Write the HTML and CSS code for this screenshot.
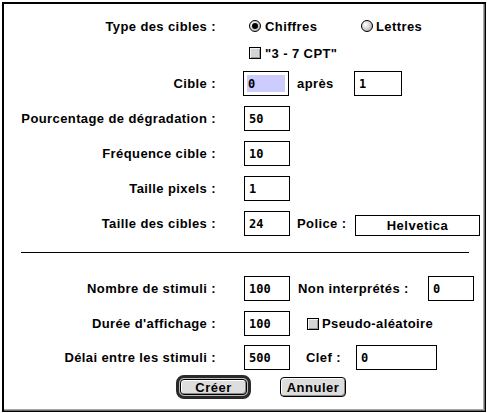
FILE: index.html
```html
<!DOCTYPE html>
<html lang="fr">
<head>
<meta charset="utf-8">
<title>Cibles</title>
<link rel="stylesheet" href="styles.css">
</head>
<body>
<div class="window">
  <div class="row row-type">
    <span class="label">Type des cibles :</span>
    <span class="radio on chiffres"></span><span class="opt opt-chiffres">Chiffres</span>
    <span class="radio lettres"></span><span class="opt">Lettres</span>
  </div>
  <div class="row row-check">
    <span class="check cpt"></span><span class="opt">"3 - 7 CPT"</span>
  </div>
  <div class="row r-cible">
    <span class="label">Cible :</span>
    <span class="field f-first"><span class="sel">0</span></span>
    <span class="label2 apres">après</span>
    <span class="field f-apres">1</span>
  </div>
  <div class="row r-std">
    <span class="label">Pourcentage de dégradation :</span>
    <span class="field">50</span>
  </div>
  <div class="row r-std">
    <span class="label">Fréquence cible :</span>
    <span class="field">10</span>
  </div>
  <div class="row r-std">
    <span class="label">Taille pixels :</span>
    <span class="field">1</span>
  </div>
  <div class="row r-std">
    <span class="label">Taille des cibles :</span>
    <span class="field">24</span>
    <span class="label2 police">Police :</span>
    <span class="popup">Helvetica</span>
  </div>
  <div class="sep"></div>
  <div class="row r-nombre">
    <span class="label">Nombre de stimuli :</span>
    <span class="field">100</span>
    <span class="label2 nonint">Non interprétés :</span>
    <span class="field f-nonint">0</span>
  </div>
  <div class="row r-std">
    <span class="label">Durée d'affichage :</span>
    <span class="field">100</span>
    <span class="check pseudo"></span><span class="opt">Pseudo-aléatoire</span>
  </div>
  <div class="row r-delai">
    <span class="label">Délai entre les stimuli :</span>
    <span class="field">500</span>
    <span class="label2 clef">Clef :</span>
    <span class="field f-clef">0</span>
  </div>
  <div class="buttons">
    <span class="default-ring"><span class="btn">Créer</span></span>
    <span class="btn annuler">Annuler</span>
  </div>
</div>
</body>
</html>
```

FILE: styles.css
```css
html, body {
  margin: 0;
  padding: 0;
  background: #ffffff;
}
body {
  width: 487px;
  height: 413px;
  overflow: hidden;
  font-family: "Liberation Sans", Arial, sans-serif;
  font-weight: bold;
  font-size: 13px;
  color: #000;
}
.window {
  margin: 2px 0 0 2px;
  width: 484px;
  height: 410px;
  box-sizing: border-box;
  border: 2px solid #000;
  border-right: 1px solid #000;
  border-bottom: 1px solid #000;
  box-shadow: inset -1px -1px 0 #6a6a6a, inset -2px -2px 0 #a8a8a8;
  background: #fff;
  display: flex;
  flex-direction: column;
  padding-top: 14px;
}
.row {
  display: flex;
  align-items: center;
  height: 25px;
  flex: none;
}
.label {
  width: 212px;
  text-align: right;
  flex: none;
  letter-spacing: 0.4px;
  white-space: nowrap;
}
.opt, .label2 {
  letter-spacing: 0.4px;
  white-space: nowrap;
  flex: none;
}
.row-type { height: 16px; }
.row-check { height: 12px; margin-top: 13px; }
.r-cible { margin-top: 12px; }
.r-std { margin-top: 10px; }
.r-nombre { margin-top: 23px; }
.r-delai { margin-top: 9px; }

.radio {
  width: 12px;
  height: 12px;
  box-sizing: border-box;
  border: 1px solid #000;
  border-radius: 50%;
  background: radial-gradient(circle at 35% 35%, #ffffff 0, #d8d8d8 45%, #9a9a9a 100%);
  flex: none;
  margin-right: 4px;
  position: relative;
}
.radio.on::after {
  content: "";
  position: absolute;
  left: 2px;
  top: 2px;
  width: 6px;
  height: 6px;
  border-radius: 50%;
  background: #000;
}
.radio.chiffres { margin-left: 33px; }
.opt-chiffres { width: 96px; }
.radio.lettres { margin-right: 3px; }

.check {
  width: 12px;
  height: 12px;
  box-sizing: border-box;
  border: 1px solid #000;
  background: #d4d4d4;
  box-shadow: inset 1px 1px 0 #f4f4f4, inset -1px -1px 0 #9a9a9a;
  flex: none;
  margin-right: 4px;
}
.check.cpt { margin-left: 245px; }
.check.pseudo { margin-left: 17px; margin-right: 3px; }

.field {
  margin-left: 28px;
  width: 46px;
  height: 25px;
  box-sizing: border-box;
  border: 1px solid #000;
  padding: 3px 3px 3px 4px;
  flex: none;
  display: flex;
  align-items: center;
  font-family: "DejaVu Sans Mono", monospace;
  font-size: 12px;
  font-weight: bold;
}
.field.f-first { margin-left: 27px; }
.sel {
  display: flex;
  align-items: center;
  width: 100%;
  height: 100%;
  background: #ccccff;
  margin-left: -1px;
  padding-left: 1px;
}
.label2 { margin-left: 8px; }
.apres { width: 57px; }
.field.f-apres { margin-left: 0; width: 48px; }
.police { margin-left: 7px; width: 58px; }
.popup {
  width: 125px;
  height: 21px;
  box-sizing: border-box;
  border: 1px solid #000;
  display: flex;
  align-items: center;
  justify-content: center;
  letter-spacing: 0.5px;
  margin-top: 4px;
  flex: none;
}
.nonint { width: 130px; }
.field.f-nonint { margin-left: 0; }
.clef { margin-left: 16px; width: 50px; }
.field.f-clef { margin-left: 0; width: 81px; }

.sep {
  margin: 16px 0 0 17px;
  width: 448px;
  height: 1px;
  background: #000;
  flex: none;
}

.buttons {
  display: flex;
  align-items: center;
  margin: 5px 0 0 172px;
  height: 24px;
}
.default-ring {
  width: 75px;
  height: 24px;
  box-sizing: border-box;
  border: 3px solid #2a2a2a;
  border-radius: 8px;
  padding: 1px;
  display: flex;
  background: #bdbdbd;
}
.btn {
  flex: 1;
  display: flex;
  align-items: center;
  justify-content: center;
  box-sizing: border-box;
  border: 1px solid #000;
  border-radius: 4px;
  background: #dddddd;
  box-shadow: inset 1px 1px 0 #ffffff, inset -1px -1px 0 #8a8a8a;
  letter-spacing: 0.5px;
}
.btn.annuler {
  flex: none;
  margin-left: 29px;
  width: 66px;
  height: 20px;
}
```
